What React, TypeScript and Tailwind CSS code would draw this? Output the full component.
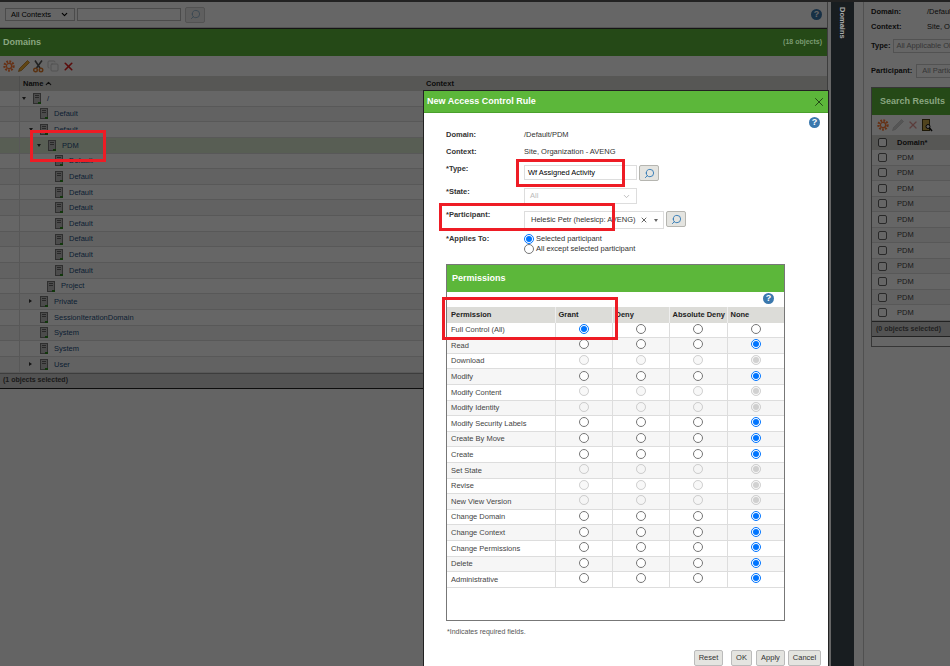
import { ChevronDown, ChevronUp, Copy, Search, X } from "lucide-react";

const treeRows = [
  { name: "/", indent: 34, arrow: "down" },
  { name: "Default", indent: 41 },
  { name: "Default", indent: 41, arrow: "down" },
  { name: "PDM", indent: 49, arrow: "down", selected: true },
  { name: "Default", indent: 56 },
  { name: "Default", indent: 56 },
  { name: "Default", indent: 56 },
  { name: "Default", indent: 56 },
  { name: "Default", indent: 56 },
  { name: "Default", indent: 56 },
  { name: "Default", indent: 56 },
  { name: "Default", indent: 56 },
  { name: "Project", indent: 48 },
  { name: "Private", indent: 41, arrow: "right" },
  { name: "SessionIterationDomain", indent: 41 },
  { name: "System", indent: 41 },
  { name: "System", indent: 41 },
  { name: "User", indent: 41, arrow: "right" },
];

// on: which radio column is picked, disabled: row is locked
const permissions = [
  { name: "Full Control (All)", on: 0 },
  { name: "Read", on: 3 },
  { name: "Download", on: 3, disabled: true },
  { name: "Modify", on: 3 },
  { name: "Modify Content", on: 3, disabled: true },
  { name: "Modify Identity", on: 3, disabled: true },
  { name: "Modify Security Labels", on: 3 },
  { name: "Create By Move", on: 3 },
  { name: "Create", on: 3 },
  { name: "Set State", on: 3, disabled: true },
  { name: "Revise", on: 3, disabled: true },
  { name: "New View Version", on: 3, disabled: true },
  { name: "Change Domain", on: 3 },
  { name: "Change Context", on: 3 },
  { name: "Change Permissions", on: 3 },
  { name: "Delete", on: 3 },
  { name: "Administrative", on: 3 },
];

const permCols = "grid grid-cols-[108.5px_57px_57px_58px_1fr]";

function DomainIcon() {
  return (
    <svg width="8" height="11" viewBox="0 0 8 11" className="shrink-0">
      <rect x="0" y="0" width="8" height="11" fill="#777" />
      <rect x="1" y="1" width="6" height="9" fill="#bdbdbd" />
      <rect x="2" y="2" width="4" height="1" fill="#666" />
      <rect x="2" y="4" width="4" height="1" fill="#666" />
      <rect x="5" y="9" width="3" height="2" fill="#2f8a20" />
    </svg>
  );
}

function GearIcon() {
  return (
    <svg width="12" height="12" viewBox="0 0 12 12" className="shrink-0">
      <circle cx="6" cy="6" r="4.5" fill="none" stroke="#ff7a35" strokeWidth="2.4" strokeDasharray="1.8 1.2" />
      <circle cx="6" cy="6" r="2.6" fill="none" stroke="#ff7a35" strokeWidth="1.2" />
    </svg>
  );
}

function PencilIcon({ faded }: { faded?: boolean }) {
  return (
    <svg width="12" height="12" viewBox="0 0 12 12" className="shrink-0">
      <path d="M9.5 0.5 L11.5 2.5 L3.5 10.5 L0.5 11.5 L1.5 8.5 Z" fill={faded ? "#d4d4d4" : "#f0b030"} stroke={faded ? "#c4c4c4" : "#b06a18"} strokeWidth="0.7" />
    </svg>
  );
}

function ScissorsIcon() {
  return (
    <svg width="11" height="13" viewBox="0 0 11 13" className="shrink-0">
      <path d="M2 0.5 L7 8 M9 0.5 L3.5 8" stroke="#555" strokeWidth="1.6" fill="none" />
      <circle cx="2.5" cy="10" r="1.8" fill="none" stroke="#e07a28" strokeWidth="1.4" />
      <circle cx="8" cy="10" r="1.8" fill="none" stroke="#e07a28" strokeWidth="1.4" />
    </svg>
  );
}

function FindIcon() {
  return (
    <svg width="11" height="13" viewBox="0 0 11 13" className="shrink-0">
      <rect x="0.5" y="0.5" width="7" height="11" fill="#c9a94a" stroke="#4a3d12" />
      <circle cx="6" cy="7.5" r="2" fill="#eee" stroke="#111" />
      <path d="M7.5 9 L10 12" stroke="#111" strokeWidth="1.5" />
    </svg>
  );
}

function HelpIcon({ className }: { className?: string }) {
  return (
    <div className={`flex h-[11px] w-[11px] items-center justify-center rounded-full bg-[#3b78ad] text-[9px] leading-none font-bold text-white ${className ?? ""}`}>
      ?
    </div>
  );
}

function SearchButton() {
  return (
    <div className="flex h-[16px] w-[20px] items-center justify-center rounded-[2px] border border-[#b5b5b0] bg-[#e4e4e0]">
      <Search size={11} strokeWidth={2} className="-scale-x-100 text-[#2f78b5]" />
    </div>
  );
}

function Radio({ name, checked, disabled }: { name: string; checked?: boolean; disabled?: boolean }) {
  return <input type="radio" name={name} defaultChecked={checked} disabled={disabled} className="m-0 h-[10px] w-[10px]" />;
}

function DomainsPanel() {
  return (
    <div className="mr-[3px] flex w-[828px] shrink-0 flex-col border-r border-[#999]">
      <div className="flex h-[26px] items-center gap-[2px] border-b border-[#ccc] pl-[5px]">
        <div className="flex h-[13px] w-[70px] items-center justify-between border border-[#bbb] bg-white px-[5px] text-[7.5px] text-black">
          All Contexts
          <ChevronDown size={9} strokeWidth={3} />
        </div>
        <div className="h-[13px] w-[104px] border border-[#bbb] bg-white" />
        <div className="ml-[2px] flex h-[16px] w-[20px] items-center justify-center rounded-[2px] border border-[#ccc] bg-[#eee]">
          <Search size={11} className="-scale-x-100 text-[#8fb2cc]" />
        </div>
        <HelpIcon className="mr-[5px] ml-auto" />
      </div>
      <div className="flex h-[28px] items-center justify-between border-t border-[#333] bg-[#5cb73a] px-[3px]">
        <span className="relative z-10 text-[9px] font-bold text-[#8aa680]">Domains</span>
        <span className="relative z-10 pr-[2px] text-[7px] font-bold text-[#7a9a70]">(18 objects)</span>
      </div>
      <div className="flex h-[20px] items-center gap-[3px] pl-[3px]">
        <GearIcon />
        <PencilIcon />
        <ScissorsIcon />
        <Copy size={12} className="text-[#ccc]" />
        <X size={13} strokeWidth={3} className="text-[#e0201c]" />
      </div>
      <div className="flex h-[15px] bg-[#d9d9d5] text-[7.5px] font-bold text-[#222]">
        <div className="w-[20px] border-r border-[#c4c4c0]" />
        <div className="flex w-[403px] items-center gap-[1px] pl-[3px]">
          Name <ChevronUp size={9} strokeWidth={3} />
        </div>
        <div className="flex items-center pl-[3px]">Context</div>
      </div>
      {treeRows.map((row, i) => (
        <div key={i} className={`flex h-[15.65px] border-b border-[#ddd] ${row.selected ? "bg-[#dcecd2]" : i % 2 ? "bg-[#f6f6f6]" : "bg-white"}`}>
          <div className="w-[20px] border-r border-[#ddd]" />
          <div className="relative flex items-center gap-[6px] text-[7.5px] text-[#1c4f80]" style={{ paddingLeft: row.indent - 21 }}>
            {row.arrow === "down" && <span className="absolute top-[6px] h-0 w-0 border-x-[2.5px] border-t-[3px] border-x-transparent border-t-[#333]" style={{ left: row.indent - 32 }} />}
            {row.arrow === "right" && <span className="absolute top-[5px] h-0 w-0 border-y-[2.5px] border-l-[3px] border-y-transparent border-l-[#333]" style={{ left: row.indent - 32 }} />}
            <DomainIcon />
            {row.name}
          </div>
        </div>
      ))}
      <div className="flex h-[16px] items-center border-t border-t-[#999] border-b border-b-[#222] bg-[#cfcfcf] pl-[3px] text-[7px] font-bold text-[#444]">
        (1 objects selected)
      </div>
      <div className="flex-1 bg-[#fbfbfb]" />
    </div>
  );
}

function SearchPanel() {
  return (
    <div className="flex min-w-0 flex-1">
      <div className="w-[10px] border-r border-[#c8c8c8]" />
      <div className="min-w-0 flex-1 pt-[2px] pl-[7px] text-[7.5px] text-[#222]">
        <div className="flex h-[15px] items-center font-bold">
          <span className="w-[56px] shrink-0">Domain:</span>
          <span className="font-normal whitespace-nowrap">/Default</span>
        </div>
        <div className="flex h-[15px] items-center font-bold">
          <span className="w-[56px] shrink-0">Context:</span>
          <span className="font-normal whitespace-nowrap">Site, Organization</span>
        </div>
        <div className="mt-[5px] flex h-[14px] items-center gap-[3px] font-bold">
          Type:
          <div className="flex-1 border border-[#ccc] bg-white pl-[2px] font-normal whitespace-nowrap text-[#888]">All Applicable Object Types</div>
        </div>
        <div className="mt-[11px] flex h-[14px] items-center gap-[4px] font-bold">
          Participant:
          <div className="flex-1 border border-[#ccc] bg-white pl-[5px] font-normal whitespace-nowrap text-[#888]">All Participants</div>
        </div>
        <div className="mt-[9px] w-[100px] border border-[#888]">
          <div className="flex h-[27px] items-center bg-[#5cb73a] pl-[8px]">
            <span className="relative z-10 text-[9px] font-bold whitespace-nowrap text-[#8aa680]">Search Results</span>
          </div>
          <div className="flex h-[20px] items-center gap-[3px] pl-[5px]">
            <GearIcon />
            <PencilIcon faded />
            <X size={12} strokeWidth={2.5} className="text-[#e39a96]" />
            <FindIcon />
          </div>
          <div className="flex h-[15px] items-center bg-[#d9d9d5] font-bold">
            <div className="flex w-[20px] justify-center"><span className="h-[9px] w-[9px] rounded-[2px] border border-[#555] bg-white" /></div>
            <span className="pl-[5px]">Domain*</span>
          </div>
          {Array.from({ length: 11 }).map((_, i) => (
            <div key={i} className={`flex h-[15.55px] items-center border-b border-[#ddd] ${i % 2 ? "bg-[#f6f6f6]" : "bg-white"}`}>
              <div className="flex w-[20px] justify-center"><span className="h-[9px] w-[9px] rounded-[2px] border border-[#666] bg-white" /></div>
              <span className="pl-[5px] text-[#444]">PDM</span>
            </div>
          ))}
          <div className="flex h-[16px] items-center border-y border-[#555] bg-[#cfcfcf] pl-[4px] text-[7px] font-bold whitespace-nowrap text-[#555]">(0 objects selected)</div>
          <div className="h-[9px]" />
        </div>
      </div>
    </div>
  );
}

function AccessRuleDialog() {
  return (
    <div className="absolute top-[90px] left-[423px] h-[600px] w-[406px] border border-[#222] bg-white text-[7.5px] text-[#333]">
      <div className="flex h-[22px] items-center justify-between border-b border-[#4aa02c] bg-[#5cb73a] pr-[2px] pl-[3px]">
        <span className="text-[9px] font-bold text-white">New Access Control Rule</span>
        <X size={14} strokeWidth={1.5} className="text-[#1c3a12]" />
      </div>
      <div className="flex h-[15px] items-end justify-end pr-[8px]">
        <HelpIcon />
      </div>
      <div className="ml-[22px] grid grid-cols-[78px_1fr] font-bold">
        <div className="h-[17px] pt-[1px]">Domain:</div>
        <div className="pt-[1px] font-normal">/Default/PDM</div>
        <div className="h-[17px] pt-[1px]">Context:</div>
        <div className="pt-[1px] font-normal">Site, Organization - AVENG</div>
        <div className="h-[23px] pt-[1px]">*Type:</div>
        <div className="flex items-start gap-[2px] pt-[3px] font-normal text-black">
          <div className="flex h-[15px] w-[113px] items-center border border-[#ddd] pl-[3px]">Wf Assigned Activity</div>
          <SearchButton />
        </div>
        <div className="h-[23px] pt-[1px]">*State:</div>
        <div className="pt-[3px] font-normal text-[#bbb]">
          <div className="flex h-[16px] w-[113px] items-center justify-between border border-[#ddd] px-[5px]">
            All
            <ChevronDown size={9} className="text-[#aaa]" />
          </div>
        </div>
        <div className="h-[24px] pt-[1px]">*Participant:</div>
        <div className="flex items-start gap-[2px] pt-[3px] font-normal">
          <div className="flex h-[18px] w-[140px] items-center justify-between border border-[#ddd] pr-[5px] pl-[6px]">
            <span className="whitespace-nowrap">Helešic Petr (helesicp: AVENG)</span>
            <X size={8} strokeWidth={3} className="ml-[4px] shrink-0 text-[#666]" />
            <span className="ml-[5px] h-0 w-0 shrink-0 border-x-[2.5px] border-t-[3px] border-x-transparent border-t-[#666]" />
          </div>
          <SearchButton />
        </div>
        <div className="h-[32px] pt-[1px]">*Applies To:</div>
        <div className="pt-[2px] font-normal">
          <label className="flex h-[10px] items-center gap-[2px]">
            <Radio name="applies" checked />
            Selected participant
          </label>
          <label className="flex h-[10px] items-center gap-[2px]">
            <Radio name="applies" />
            All except selected participant
          </label>
        </div>
      </div>
      <div className="ml-[22px] h-[357px] w-[339px] border border-[#777]">
        <div className="flex h-[27px] items-center bg-[#5cb73a] pl-[5px] text-[9px] font-bold text-white">Permissions</div>
        <div className="flex h-[15px] items-start justify-end pt-[1px] pr-[10px]">
          <HelpIcon />
        </div>
        <div>
          <div className={`${permCols} h-[15.6px] bg-[#dcdcd8] font-bold text-[#222]`}>
            <div className="flex items-center border-r border-[#eee] pl-[4px]">Permission</div>
            <div className="flex items-center border-r border-[#eee] pl-[3px]">Grant</div>
            <div className="flex items-center border-r border-[#eee] pl-[3px]">Deny</div>
            <div className="flex items-center border-r border-[#eee] pl-[3px] whitespace-nowrap">Absolute Deny</div>
            <div className="flex items-center pl-[3px]">None</div>
          </div>
          {permissions.map((row, i) => (
            <div key={row.name} className={`${permCols} h-[15.6px] border-b border-[#ddd] ${i % 2 ? "bg-[#f6f6f6]" : "bg-white"}`}>
              <div className="flex items-center border-r border-[#ddd] pl-[4px] text-[#444]">{row.name}</div>
              {[0, 1, 2, 3].map((col) => (
                <div key={col} className={`flex items-center justify-center pb-[2px] ${col < 3 ? "border-r border-[#ddd]" : ""}`}>
                  <Radio name={row.name} checked={row.on === col} disabled={row.disabled} />
                </div>
              ))}
            </div>
          ))}
        </div>
      </div>
      <div className="mt-[6px] ml-[23px] text-[7px] text-[#555]">*Indicates required fields.</div>
      <div className="mt-[12px] flex justify-end pr-[7px] text-[#333]">
        <div className="flex h-[16px] w-[29px] items-center justify-center rounded-[2px] border border-[#bbb] bg-[#e4e4e0]">Reset</div>
        <div className="ml-[8px] flex h-[16px] w-[21px] items-center justify-center rounded-[2px] border border-[#bbb] bg-[#e4e4e0]">OK</div>
        <div className="ml-[4px] flex h-[16px] w-[29px] items-center justify-center rounded-[2px] border border-[#bbb] bg-[#e4e4e0]">Apply</div>
        <div className="ml-[3px] flex h-[16px] w-[33px] items-center justify-center rounded-[2px] border border-[#bbb] bg-[#e4e4e0]">Cancel</div>
      </div>
    </div>
  );
}

export default function App() {
  return (
    <div className="relative h-[666px] w-[950px] overflow-hidden bg-white font-['Liberation_Sans',Arial,sans-serif]">
      <div className="h-[2px] bg-[#555]" />
      <div className="flex h-[664px]">
        <DomainsPanel />
        <div className="flex w-[23px] shrink-0 justify-center bg-[#3d4a50] pt-[5px]">
          <span className="relative z-10 text-[7.5px] font-bold text-[#aaa] [writing-mode:vertical-rl]">Domains</span>
        </div>
        <SearchPanel />
      </div>
      <div className="absolute inset-0 bg-black/60" />
      <AccessRuleDialog />
      {/* red annotation boxes on top of the dialog */}
      <div className="absolute top-[130px] left-[30px] h-[32px] w-[76px] border-[3px] border-[#ee1c25]" />
      <div className="absolute top-[159px] left-[516px] h-[28px] w-[109px] border-[3px] border-[#ee1c25]" />
      <div className="absolute top-[203px] left-[439px] h-[28px] w-[176px] border-[3px] border-[#ee1c25]" />
      <div className="absolute top-[297px] left-[442px] h-[43px] w-[176px] border-[3px] border-[#ee1c25]" />
    </div>
  );
}
